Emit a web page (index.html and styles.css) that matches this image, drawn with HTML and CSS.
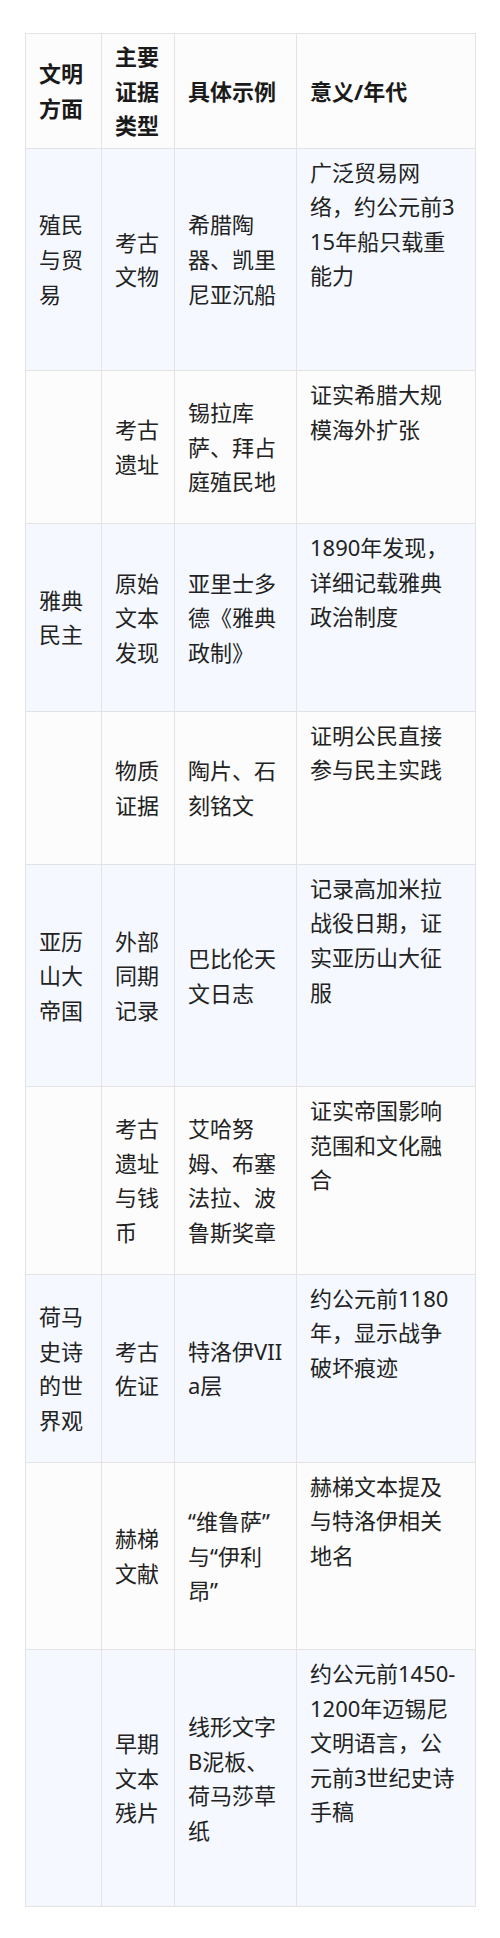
FILE: index.html
```html
<!DOCTYPE html>
<html lang="zh-CN">
<head>
<meta charset="utf-8">
<title>文明证据</title>
<link rel="stylesheet" href="styles.css">
</head>
<body>
<div class="page">
<table class="evidence">
  <colgroup>
    <col class="c1"><col class="c2"><col class="c3"><col class="c4">
  </colgroup>
  <thead>
    <tr><th>文明方面</th><th>主要证据类型</th><th>具体示例</th><th>意义/年代</th></tr>
  </thead>
  <tbody>
    <tr class="alt"><td>殖民与贸易</td><td>考古文物</td><td>希腊陶器、凯里尼亚沉船</td><td class="note">广泛贸易网络，约公元前315年船只载重能力</td></tr>
    <tr><td></td><td>考古遗址</td><td>锡拉库萨、拜占庭殖民地</td><td class="note">证实希腊大规模海外扩张</td></tr>
    <tr class="alt"><td>雅典民主</td><td>原始文本发现</td><td>亚里士多德《雅典政制》</td><td class="note">1890年发现，详细记载雅典政治制度</td></tr>
    <tr><td></td><td>物质证据</td><td>陶片、石刻铭文</td><td class="note">证明公民直接参与民主实践</td></tr>
    <tr class="alt"><td>亚历山大帝国</td><td>外部同期记录</td><td>巴比伦天文日志</td><td class="note">记录高加米拉战役日期，证实亚历山大征服</td></tr>
    <tr><td></td><td>考古遗址与钱币</td><td>艾哈努姆、布塞法拉、波鲁斯奖章</td><td class="note">证实帝国影响范围和文化融合</td></tr>
    <tr class="alt"><td>荷马史诗的世界观</td><td>考古佐证</td><td>特洛伊VIIa层</td><td class="note">约公元前1180年，显示战争破坏痕迹</td></tr>
    <tr><td></td><td>赫梯文献</td><td>“维鲁萨”与“伊利昂”</td><td class="note">赫梯文本提及与特洛伊相关地名</td></tr>
    <tr class="alt"><td></td><td>早期文本残片</td><td>线形文字B泥板、荷马莎草纸</td><td class="note">约公元前1450-1200年迈锡尼文明语言，公元前3世纪史诗手稿</td></tr>
  </tbody>
</table>
</div>
</body>
</html>
```
FILE: styles.css
```css
html, body {
  margin: 0;
  padding: 0;
  background: #ffffff;
}

.page {
  padding: 33px 25px 35px;
}

.evidence {
  width: 450px;
  table-layout: fixed;
  border-collapse: collapse;
  font-family: "Noto Sans", "Noto Sans CJK SC", sans-serif;
  font-size: 22px;
  line-height: 34.56px;
  color: #222222;
  word-break: break-all;
}

.c1 { width: 76px; }
.c2 { width: 73px; }
.c3 { width: 122px; }
.c4 { width: 179px; }

.evidence th,
.evidence td {
  border: 1px solid #e3e3e6;
  padding: 5px 13px;
  text-align: left;
  vertical-align: middle;
}

.evidence th {
  font-weight: 700;
  color: #1a1a1a;
  background: #fcfcfc;
}

.evidence td {
  font-weight: 400;
  background: #fcfcfc;
}

.evidence tr.alt td {
  background: #f5f9ff;
}

.evidence td.note {
  padding-top: 6px;
  padding-bottom: 77px;
}
```
